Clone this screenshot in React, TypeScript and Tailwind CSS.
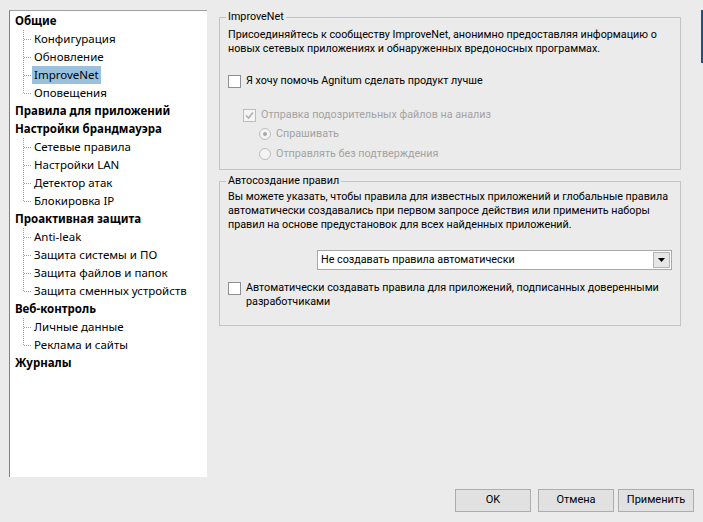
import React from "react";

const FONT = { fontFamily: '"Noto Sans", "DejaVu Sans", sans-serif' };
const PANEL = { fontFamily: 'Roboto, "Noto Sans", sans-serif' };

type Item = { label: string; children?: string[] };

const tree: Item[] = [
  { label: "Общие", children: ["Конфигурация", "Обновление", "ImproveNet", "Оповещения"] },
  { label: "Правила для приложений" },
  { label: "Настройки брандмауэра", children: ["Сетевые правила", "Настройки LAN", "Детектор атак", "Блокировка IP"] },
  { label: "Проактивная защита", children: ["Anti-leak", "Защита системы и ПО", "Защита файлов и папок", "Защита сменных устройств"] },
  { label: "Веб-контроль", children: ["Личные данные", "Реклама и сайты"] },
  { label: "Журналы" },
];

function TreeLines({ last }: { last: boolean }) {
  return (
    <svg width="17" height="18" className="shrink-0">
      <line x1="8.5" y1="0" x2="8.5" y2={last ? 9 : 18} stroke="#a0a0a0" strokeDasharray="1 1" />
      <line x1="9" y1="9.5" x2="17" y2="9.5" stroke="#a0a0a0" strokeDasharray="1 1" />
    </svg>
  );
}

function Checkbox({ checked, disabled }: { checked?: boolean; disabled?: boolean }) {
  return (
    <div
      className={
        "w-[13px] h-[13px] shrink-0 border flex items-center justify-center " +
        (disabled ? "border-[#bcbcbc] bg-[#f4f4f4]" : "border-[#8e8f8f] bg-white")
      }
    >
      {checked && (
        <svg width="9" height="9" viewBox="0 0 9 9">
          <path d="M1 4.5 L3.5 7 L8 1.5" fill="none" stroke={disabled ? "#b0b0b0" : "#333"} strokeWidth="1.6" />
        </svg>
      )}
    </div>
  );
}

function Radio({ checked }: { checked?: boolean }) {
  return (
    <svg width="12" height="12" viewBox="0 0 12 12" className="shrink-0">
      <circle cx="6" cy="6" r="5.5" fill="#f4f4f4" stroke="#bcbcbc" />
      {checked && <circle cx="6" cy="6" r="2" fill="#a8a8a8" />}
    </svg>
  );
}

function Button({ label, className }: { label: string; className?: string }) {
  return (
    <div
      className={
        "w-[76px] h-[23px] border border-[#adadad] bg-[#e1e1e1] flex items-center justify-center text-[11px] text-black " +
        (className || "")
      }
      style={PANEL}
    >
      {label}
    </div>
  );
}

export default function App() {
  return (
    <div className="w-[703px] h-[522px] bg-[#ebebeb] flex text-[11.5px] text-black overflow-hidden whitespace-nowrap" style={FONT}>
      <div className="flex-1 flex flex-col">
        <div className="flex pt-[10px]">
          {/* Tree */}
          <div className="ml-[9px] w-[198px] h-[467px] bg-white border-t border-l border-t-[#a0a0a0] border-l-[#828282] pt-[1px]">
            {tree.map((it) => (
              <div key={it.label}>
                <div className="h-[18px] leading-[18px] pl-[5px] font-bold">{it.label}</div>
                {it.children?.map((c, i) => (
                  <div key={c} className="h-[18px] flex items-center pl-[5px]">
                    <TreeLines last={i === it.children!.length - 1} />
                    <span
                      className={
                        "h-[18px] leading-[18px] px-[2px] " + (c === "ImproveNet" ? "bg-[#99c1de]" : "")
                      }
                    >
                      {c}
                    </span>
                  </div>
                ))}
              </div>
            ))}
          </div>

          {/* Right side */}
          <div className="ml-[12px] w-[462px] flex flex-col text-[10.75px]" style={PANEL}>
            <fieldset className="w-[462px] min-w-0 border border-[#c4c4c4] pl-[8px] pr-[8px] pb-[8px]">
              <legend className="-ml-[2px] px-[2px] leading-[14px]">ImproveNet</legend>
              <div className="mt-[4px] leading-[14px]">
                Присоединяйтесь к сообществу ImproveNet, анонимно предоставляя информацию о
                <br />
                новых сетевых приложениях и обнаруженных вредоносных программах.
              </div>
              <div className="mt-[18px] flex items-center h-[14px]">
                <Checkbox />
                <span className="ml-[5px] leading-[14px]">Я хочу помочь Agnitum сделать продукт лучше</span>
              </div>
              <div className="mt-[20px] ml-[15px] flex items-center h-[14px] text-[#a3a3a3]">
                <Checkbox checked disabled />
                <span className="ml-[5px] leading-[14px]">Отправка подозрительных файлов на анализ</span>
              </div>
              <div className="mt-[5px] ml-[31px] flex items-center h-[14px] text-[#a3a3a3]">
                <Radio checked />
                <span className="ml-[5px] leading-[14px]">Спрашивать</span>
              </div>
              <div className="mt-[6px] ml-[31px] flex items-center h-[14px] text-[#a3a3a3]">
                <Radio />
                <span className="ml-[5px] leading-[14px]">Отправлять без подтверждения</span>
              </div>
            </fieldset>

            <fieldset className="w-[462px] min-w-0 mt-[4px] border border-[#c4c4c4] pl-[8px] pr-[8px] pb-[16px]">
              <legend className="-ml-[2px] px-[2px] leading-[14px]">Автосоздание правил</legend>
              <div className="mt-[2px] leading-[14px]">
                Вы можете указать, чтобы правила для известных приложений и глобальные правила
                <br />
                автоматически создавались при первом запросе действия или применить наборы
                <br />
                правил на основе предустановок для всех найденных приложений.
              </div>
              <div className="mt-[18px] ml-[89px] w-[355px] h-[20px] bg-white border border-[#a8a8a8] flex items-center">
                <span className="pl-[3px] flex-1 leading-[14px]">Не создавать правила автоматически</span>
                <div className="w-[17px] h-[16px] mr-[1px] bg-[#e6e6e6] border border-[#b5b5b5] flex items-center justify-center">
                  <svg width="7" height="4" viewBox="0 0 7 4">
                    <path d="M0 0 H7 L3.5 4 Z" fill="#000" />
                  </svg>
                </div>
              </div>
              <div className="mt-[12px] flex items-start">
                <Checkbox />
                <span className="ml-[5px] leading-[14px] -mt-[1px]">
                  Автоматически создавать правила для приложений, подписанных доверенными
                  <br />
                  разработчиками
                </span>
              </div>
            </fieldset>
          </div>
        </div>

        <div className="mt-[12px] flex justify-end pr-[7px]">
          <Button label="OK" />
          <Button label="Отмена" className="ml-[7px]" />
          <Button label="Применить" className="ml-[4px]" />
        </div>
      </div>
      <div className="w-[2px] flex flex-col">
        <div className="mt-[10px] h-[53px] bg-[#1f4f8c]" />
      </div>
    </div>
  );
}
